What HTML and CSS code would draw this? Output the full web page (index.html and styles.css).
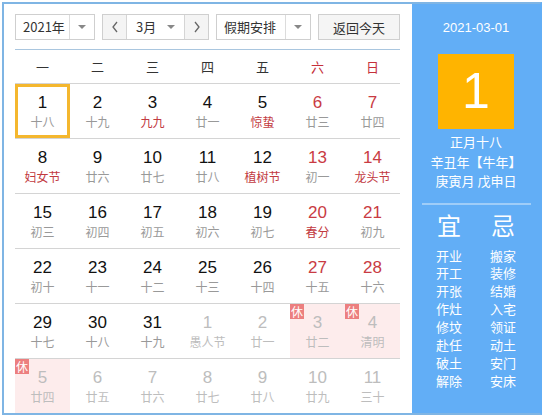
FILE: index.html
```html
<!DOCTYPE html>
<html lang="zh">
<head>
<meta charset="utf-8">
<link rel="stylesheet" href="styles.css">
</head>
<body>
<div class="frame">
  <div class="main">
    <div class="toolbar">
      <div class="select sel-year"><span class="sel-text">2021年</span><span class="sel-arrow"><i class="tri"></i></span></div>
      <div class="month-group">
        <span class="nav-btn"><svg width="8" height="12" viewBox="0 0 8 12"><path d="M6 1 L2 6 L6 11" fill="none" stroke="#666" stroke-width="1.3"/></svg></span>
        <span class="month-sel"><span class="sel-text">3月</span><i class="tri"></i></span>
        <span class="nav-btn"><svg width="8" height="12" viewBox="0 0 8 12"><path d="M2 1 L6 6 L2 11" fill="none" stroke="#666" stroke-width="1.3"/></svg></span>
      </div>
      <div class="select sel-holiday"><span class="sel-text">假期安排</span><span class="sel-arrow"><i class="tri"></i></span></div>
      <div class="today-btn">返回今天</div>
    </div>
    <div class="calendar">
      <div class="week">
        <span>一</span><span>二</span><span>三</span><span>四</span><span>五</span><span class="wk-red">六</span><span class="wk-red">日</span>
      </div>
      <div class="row">
        <div class="cell selected"><b>1</b><em>十八</em></div>
        <div class="cell"><b>2</b><em>十九</em></div>
        <div class="cell"><b>3</b><em class="fest">九九</em></div>
        <div class="cell"><b>4</b><em>廿一</em></div>
        <div class="cell"><b>5</b><em class="fest">惊蛰</em></div>
        <div class="cell wkend"><b>6</b><em>廿三</em></div>
        <div class="cell wkend"><b>7</b><em>廿四</em></div>
      </div>
      <div class="row">
        <div class="cell"><b>8</b><em class="fest">妇女节</em></div>
        <div class="cell"><b>9</b><em>廿六</em></div>
        <div class="cell"><b>10</b><em>廿七</em></div>
        <div class="cell"><b>11</b><em>廿八</em></div>
        <div class="cell"><b>12</b><em class="fest">植树节</em></div>
        <div class="cell wkend"><b>13</b><em>初一</em></div>
        <div class="cell wkend"><b>14</b><em class="fest">龙头节</em></div>
      </div>
      <div class="row">
        <div class="cell"><b>15</b><em>初三</em></div>
        <div class="cell"><b>16</b><em>初四</em></div>
        <div class="cell"><b>17</b><em>初五</em></div>
        <div class="cell"><b>18</b><em>初六</em></div>
        <div class="cell"><b>19</b><em>初七</em></div>
        <div class="cell wkend"><b>20</b><em class="fest">春分</em></div>
        <div class="cell wkend"><b>21</b><em>初九</em></div>
      </div>
      <div class="row">
        <div class="cell"><b>22</b><em>初十</em></div>
        <div class="cell"><b>23</b><em>十一</em></div>
        <div class="cell"><b>24</b><em>十二</em></div>
        <div class="cell"><b>25</b><em>十三</em></div>
        <div class="cell"><b>26</b><em>十四</em></div>
        <div class="cell wkend"><b>27</b><em>十五</em></div>
        <div class="cell wkend"><b>28</b><em>十六</em></div>
      </div>
      <div class="row">
        <div class="cell"><b>29</b><em>十七</em></div>
        <div class="cell"><b>30</b><em>十八</em></div>
        <div class="cell"><b>31</b><em>十九</em></div>
        <div class="cell other"><b>1</b><em>愚人节</em></div>
        <div class="cell other"><b>2</b><em>廿一</em></div>
        <div class="cell other rest"><span class="badge">休</span><b>3</b><em>廿二</em></div>
        <div class="cell other rest"><span class="badge">休</span><b>4</b><em>清明</em></div>
      </div>
      <div class="row">
        <div class="cell other rest"><span class="badge">休</span><b>5</b><em>廿四</em></div>
        <div class="cell other"><b>6</b><em>廿五</em></div>
        <div class="cell other"><b>7</b><em>廿六</em></div>
        <div class="cell other"><b>8</b><em>廿七</em></div>
        <div class="cell other"><b>9</b><em>廿八</em></div>
        <div class="cell other"><b>10</b><em>廿九</em></div>
        <div class="cell other"><b>11</b><em>三十</em></div>
      </div>
    </div>
  </div>
  <div class="side">
    <div class="side-date">2021-03-01</div>
    <div class="big-day">1</div>
    <div class="lunar-info">
      <div>正月十八</div>
      <div>辛丑年【牛年】</div>
      <div>庚寅月 戊申日</div>
    </div>
    <div class="divider"></div>
    <div class="yiji">
      <div class="yj-col">
        <div class="yj-title">宜</div>
        <div>开业</div><div>开工</div><div>开张</div><div>作灶</div><div>修坟</div><div>赴任</div><div>破土</div><div>解除</div>
      </div>
      <div class="yj-col">
        <div class="yj-title">忌</div>
        <div>搬家</div><div>装修</div><div>结婚</div><div>入宅</div><div>领证</div><div>动土</div><div>安门</div><div>安床</div>
      </div>
    </div>
  </div>
</div>
</body>
</html>
```
FILE: styles.css
```css
* { box-sizing: border-box; }
html, body { margin: 0; padding: 0; background: #fff; }
body {
  font-family: "Noto Sans CJK SC", "Liberation Sans", sans-serif;
  color: #333;
}
.frame {
  margin: 2px 0 0 2px;
  width: 540px;
  height: 413px;
  border: 2px solid #7fb5e4;
  border-right-color: #62aef6;
  display: flex;
  overflow: hidden;
}
.main {
  width: 408px;
  padding: 10px 12px 0 11px;
  overflow: hidden;
}
.toolbar {
  display: flex;
  gap: 7px;
  height: 26px;
  margin-bottom: 9px;
}
.select, .month-group, .today-btn {
  height: 26px;
  border: 1px solid #cfcfcf;
  background: #fff;
  display: flex;
  align-items: center;
  font-size: 13px;
  color: #333;
}
.sel-year { width: 80px; }
.sel-holiday { width: 95px; }
.sel-text { flex: 1; padding-left: 7px; line-height: 24px; }
.sel-arrow {
  width: 25px;
  height: 24px;
  border-left: 1px solid #dcdcdc;
  display: flex;
  align-items: center;
  justify-content: center;
}
.tri {
  display: block;
  width: 0; height: 0;
  border-left: 4px solid transparent;
  border-right: 4px solid transparent;
  border-top: 4px solid #888;
}
.month-group { width: 107px; }
.nav-btn {
  width: 23px;
  height: 24px;
  background: #f4f4f4;
  display: flex;
  align-items: center;
  justify-content: center;
}
.month-sel {
  flex: 1;
  height: 24px;
  border-left: 1px solid #d5d5d5;
  border-right: 1px solid #d5d5d5;
  display: flex;
  align-items: center;
  padding-right: 9px;
}
.month-sel .sel-text { padding-left: 9px; }
.today-btn {
  width: 82px;
  justify-content: center;
  background: #f5f5f5;
}
.calendar {
  width: 385px;
  border-top: 1px solid #a9c6df;
}
.week {
  display: grid;
  grid-template-columns: repeat(7, 55px);
  height: 34px;
  border-bottom: 1px solid #d4d4d4;
  font-size: 13px;
  color: #333;
}
.week span {
  display: flex;
  align-items: center;
  justify-content: center;
}
.week .wk-red { color: #c5303a; }
.row {
  display: grid;
  grid-template-columns: repeat(7, 55px);
  height: 55px;
  border-bottom: 1px solid #d4d4d4;
}
.cell {
  position: relative;
  display: flex;
  flex-direction: column;
  align-items: center;
  padding-top: 9px;
}
.cell b {
  font-family: "Liberation Sans", Arial, sans-serif;
  font-weight: normal;
  font-size: 17px;
  line-height: 20px;
  color: #111;
}
.cell em {
  font-style: normal;
  font-size: 12px;
  line-height: 18px;
  color: #999;
}
.cell em.fest { color: #c23a3f; }
.cell.wkend b { color: #c93b43; }
.cell.other b, .cell.other em { color: #bdbdbd; }
.cell.rest { background: #fdecec; }
.cell.selected { box-shadow: inset 0 0 0 3px #f4b72e; }
.badge {
  position: absolute;
  left: 0;
  top: 0;
  width: 14px;
  height: 15px;
  background: #ec7f7f;
  color: #fff;
  font-size: 12px;
  line-height: 15px;
  text-align: center;
}
.side {
  width: 128px;
  background: #62aef6;
  color: #fff;
  display: flex;
  flex-direction: column;
  align-items: center;
  padding-top: 16px;
}
.side-date {
  font-family: "Liberation Sans", Arial, sans-serif;
  font-size: 13px;
  line-height: 16px;
}
.big-day {
  margin-top: 18px;
  width: 76px;
  height: 75px;
  background: #ffb400;
  font-family: "Liberation Sans", Arial, sans-serif;
  font-size: 50px;
  line-height: 75px;
  text-align: center;
  color: #fff;
}
.lunar-info {
  margin-top: 3px;
  font-size: 13px;
  line-height: 19.5px;
  text-align: center;
}
.divider {
  margin-top: 12px;
  width: 109px;
  height: 2px;
  background: #9fcdf8;
}
.yiji {
  display: flex;
  margin-top: 5px;
}
.yj-col {
  width: 54px;
  display: flex;
  flex-direction: column;
  align-items: center;
  font-size: 13px;
  line-height: 17.9px;
}
.yj-title {
  font-size: 24px;
  line-height: 30px;
  margin-bottom: 7px;
}
```
